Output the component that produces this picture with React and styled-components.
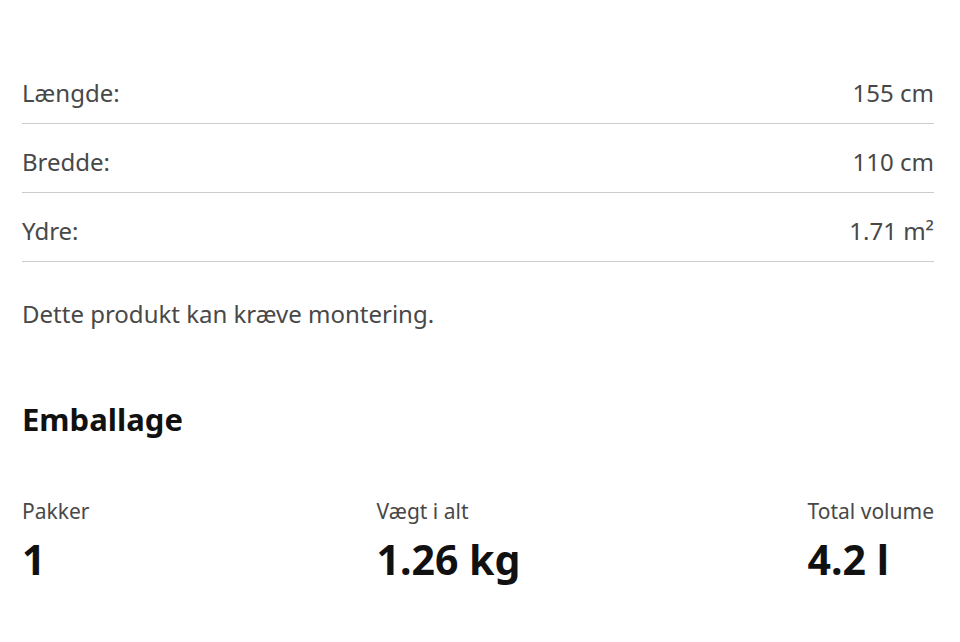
import styled, { createGlobalStyle } from "styled-components";

const Global = createGlobalStyle`
  body {
    margin: 0;
    background: #fff;
    font-family: "Noto Sans", "Open Sans", sans-serif;
  }
`;

const Page = styled.div`
  padding: 55px 26px 0 22px;
  color: #484848;
`;

const Row = styled.div`
  display: flex;
  justify-content: space-between;
  align-items: center;
  padding: 20px 0 12px;
  border-bottom: 1px solid #cccccc;
  font-size: 24px;
  line-height: 36px;
`;

const Note = styled.p`
  margin: 34px 0 0;
  font-size: 24px;
  line-height: 36px;
`;

const Heading = styled.h2`
  margin: 67px 0 0;
  font-size: 31px;
  line-height: 40px;
  font-weight: 700;
  color: #111111;
`;

const Stats = styled.div`
  display: flex;
  justify-content: space-between;
  margin-top: 57px;
`;

const Stat = styled.div`
  display: flex;
  flex-direction: column;
`;

const StatLabel = styled.span`
  font-size: 21px;
  line-height: 30px;
`;

const StatValue = styled.span`
  margin-top: 5px;
  font-size: 41px;
  line-height: 56px;
  font-weight: 700;
  color: #111111;
`;

const dims = [
  ["Længde:", "155 cm"],
  ["Bredde:", "110 cm"],
  ["Ydre:", "1.71 m²"],
];

const stats = [
  ["Pakker", "1"],
  ["Vægt i alt", "1.26 kg"],
  ["Total volume", "4.2 l"],
];

export default function App() {
  return (
    <>
      <Global />
      <Page>
        {dims.map(([k, v]) => (
          <Row key={k}>
            <span>{k}</span>
            <span>{v}</span>
          </Row>
        ))}
        <Note>Dette produkt kan kræve montering.</Note>
        <Heading>Emballage</Heading>
        <Stats>
          {stats.map(([k, v]) => (
            <Stat key={k}>
              <StatLabel>{k}</StatLabel>
              <StatValue>{v}</StatValue>
            </Stat>
          ))}
        </Stats>
      </Page>
    </>
  );
}
